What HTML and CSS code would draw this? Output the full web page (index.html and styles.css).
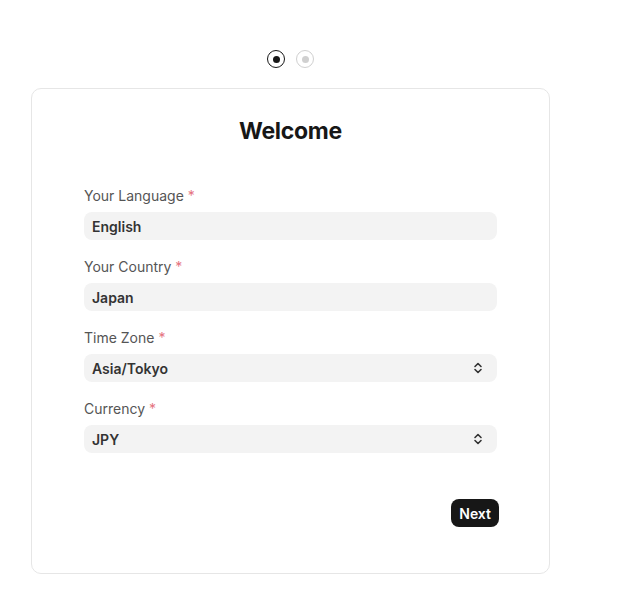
FILE: index.html
```html
<!DOCTYPE html>
<html lang="en">
<head>
    <meta charset="UTF-8">
    <meta name="viewport" content="width=device-width, initial-scale=1.0">
    <title>Setup Wizard</title>
    <link rel="stylesheet" href="styles.css">
</head>
<body>
    <div class="steps">
        <span class="step active"></span>
        <span class="step"></span>
    </div>
    <div class="card">
        <h1 class="title">Welcome</h1>
        <div class="fields">
            <div class="field">
                <label class="label">Your Language <span class="req">*</span></label>
                <div class="input">English</div>
            </div>
            <div class="field">
                <label class="label">Your Country <span class="req">*</span></label>
                <div class="input">Japan</div>
            </div>
            <div class="field">
                <label class="label">Time Zone <span class="req">*</span></label>
                <div class="input select">
                    <span>Asia/Tokyo</span>
                    <svg class="chev" width="10" height="14" viewBox="0 0 10 14"><path d="M2 5.5 L5 2.5 L8 5.5 M2 8.5 L5 11.5 L8 8.5" fill="none" stroke="#333" stroke-width="1.6" stroke-linecap="round" stroke-linejoin="round"/></svg>
                </div>
            </div>
            <div class="field">
                <label class="label">Currency <span class="req">*</span></label>
                <div class="input select">
                    <span>JPY</span>
                    <svg class="chev" width="10" height="14" viewBox="0 0 10 14"><path d="M2 5.5 L5 2.5 L8 5.5 M2 8.5 L5 11.5 L8 8.5" fill="none" stroke="#333" stroke-width="1.6" stroke-linecap="round" stroke-linejoin="round"/></svg>
                </div>
            </div>
        </div>
        <div class="actions">
            <button class="next-btn">Next</button>
        </div>
    </div>
</body>
</html>
```

FILE: styles.css
```css
body {
    margin: 0;
    font-family: Inter, 'Noto Sans', sans-serif;
    color: #171717;
    background: white;
}
.steps {
    display: flex;
    gap: 11px;
    margin: 50px 0 0 267px;
    height: 18px;
}
.step {
    width: 18px;
    height: 18px;
    box-sizing: border-box;
    border: 1.5px solid #d0d0d0;
    border-radius: 50%;
    display: flex;
    align-items: center;
    justify-content: center;
}
.step::after {
    content: "";
    width: 7px;
    height: 7px;
    border-radius: 50%;
    background: #d0d0d0;
}
.step.active { border-color: #171717; }
.step.active::after { background: #171717; }
.card {
    width: 519px;
    box-sizing: border-box;
    margin: 20px 0 0 31px;
    border: 1px solid #e6e6e6;
    border-radius: 10px;
    padding: 28px 52px 46px;
}
.title {
    margin: 0;
    text-align: center;
    font-size: 23px;
    line-height: 28px;
    font-weight: 700;
    letter-spacing: -0.3px;
}
.fields {
    margin-top: 42px;
    display: flex;
    flex-direction: column;
    gap: 18px;
}
.field {
    display: flex;
    flex-direction: column;
    gap: 7px;
}
.label {
    font-size: 14px;
    line-height: 18px;
    color: #555;
}
.req { color: #e5737f; }
.input {
    height: 28px;
    background: #f3f3f3;
    border-radius: 8px;
    padding: 0 8px;
    font-size: 14px;
    font-weight: 600;
    color: #333;
    display: flex;
    align-items: center;
}
.select { justify-content: space-between; padding-right: 14px; }
.actions {
    margin-top: 46px;
    display: flex;
    justify-content: flex-end;
    margin-right: -2px;
}
.next-btn {
    background: #171717;
    color: white;
    border: none;
    border-radius: 8px;
    height: 28px;
    padding: 0 8px;
    font-family: inherit;
    font-size: 14px;
    font-weight: 600;
}
```
